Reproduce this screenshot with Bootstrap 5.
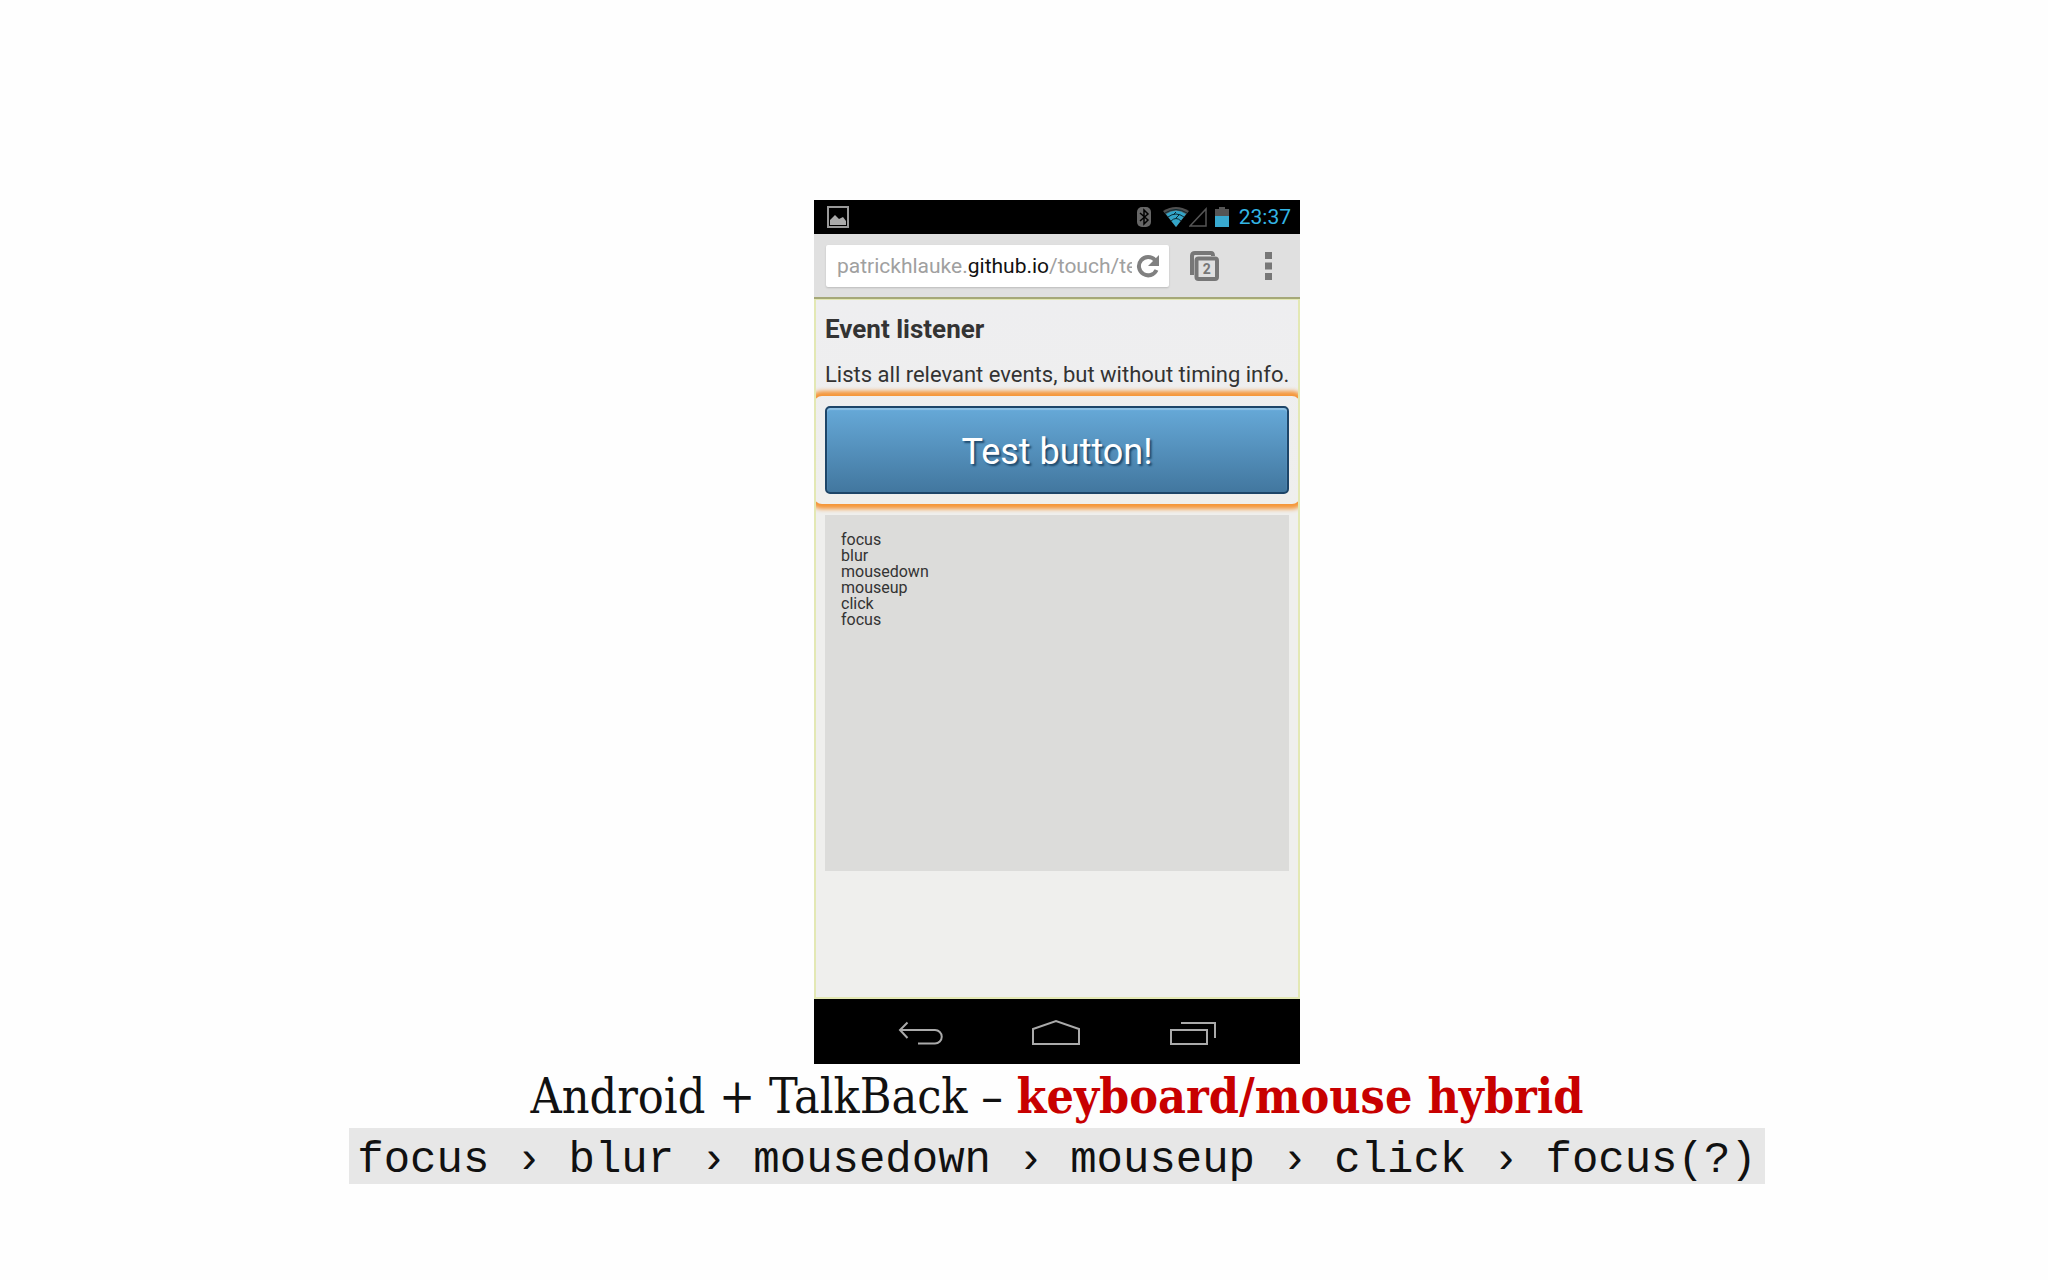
<!DOCTYPE html>
<html lang="en">
<head>
<meta charset="utf-8">
<meta name="viewport" content="width=device-width, initial-scale=1">
<title>Android + TalkBack</title>
<link href="https://cdn.jsdelivr.net/npm/bootstrap@5.3.0/dist/css/bootstrap.min.css" rel="stylesheet">
<style>
body { background: #fefefe; color: #111; font-family: Roboto, "Liberation Sans", sans-serif; }
svg { display: block; flex: none; }
.slide { padding: 200px 0 64px 66px; }
.phone { width: 100%; max-width: 486px; background: #000; }
.statusbar { height: 34px; padding: 0 9px 0 12px; }
.clock { color: #33b5e5; font-size: 21px; line-height: 34px; margin-left: 10px; }
.toolbar { height: 65px; padding: 11px 28px 10px 12px; background: #e0e0e0; border-bottom: 2px solid #a5a878; }
.omnibox { height: 42px; padding: 0 9px 0 11px; background: #fff; border-radius: 2px; box-shadow: 0 1px 2px #bbb; }
.address { color: #a0a0a0; font-size: 21px; line-height: 42px; white-space: nowrap; overflow: hidden; outline: 0; }
.address b { color: #111; font-weight: 400; }
.tool { border: 0; padding: 0; background: none; }
.tool-menu { margin-left: 46px; }
.webpage { height: 700px; border: 2px solid #e3e8b4; border-top-width: 1px; padding: 0 9px; background: linear-gradient(#eeeef0, #efefed 30%); color: #333; overflow: hidden; }
.webpage h1 { font-size: 26px; line-height: 30px; font-weight: 700; margin: 14px 0 16px; }
.webpage p { font-size: 22px; line-height: 30px; margin: 0 -9px 6px 0; white-space: nowrap; }
.focusring { margin: 0 -11px; padding: 10px 11px; border-radius: 8px; box-shadow: 0 0 4px 5px #f59638; }
.testbtn { height: 88px; border: 2px solid #1d4568; border-radius: 5px; color: #fff; font-size: 36px; background: linear-gradient(#66a9d8, #42779f); box-shadow: inset 0 2px 1px #8fc1e4; text-shadow: 2px 2px 2px #1f4a6d; }
.eventlog { height: 356px; margin-top: 11px; padding: 17px 16px; background: #dcdcda; font-size: 16px; line-height: 16px; }
.navkeys { height: 65px; padding: 2px 39px 0; }
.caption-line { font-family: "Roboto Slab", "DejaVu Serif Condensed", "DejaVu Serif", serif; font-size: 48px; line-height: 64px; margin: 0; font-weight: 400; }
.caption-line strong { color: #c80000; }
.sequence { font-family: "Liberation Mono", monospace; font-size: 44px; line-height: 48px; color: #111; background: #e7e7e7; padding: 8px 8px 0; white-space: pre; }
</style>
<script src="https://cdn.jsdelivr.net/npm/bootstrap@5.3.0/dist/js/bootstrap.bundle.min.js"></script>
</head>
<body>
<main class="slide d-flex flex-column align-items-center">
  <section class="phone" aria-label="Android phone">
    <div class="statusbar d-flex align-items-center">
      <svg width="24" height="24" viewBox="0 0 24 24"><path d="M2 2h20v20H2z" fill="none" stroke="#999" stroke-width="2"/><path d="M4 20v-5l5-5 4 4 4-2 3 4v4z" fill="#aaa"/></svg>
      <div class="d-flex align-items-center ms-auto">
        <svg class="me-2" width="14" height="20" viewBox="0 0 14 20"><rect width="14" height="20" rx="5" fill="#666"/><path d="M3 6l8 7-4 4V3l4 4-8 7" fill="none" stroke="#000" stroke-width="1.5"/></svg>
        <svg class="ms-1" width="26" height="20" viewBox="0 0 26 20"><path d="M0 4Q13-4 26 4L13 20z" fill="#505050"/><path d="M3 7Q13 0 23 7L13 20z" fill="#33a5c8"/><g fill="none" stroke="#0a2831" stroke-width="1"><path d="M2 6Q13-1 24 6M5 10Q13 4 21 10M8 14Q13 9 18 14"/><path d="M13 5l-3 3M13 11l3-3"/></g></svg>
        <svg width="18" height="20" viewBox="0 0 18 20"><path d="M1 19L17 2v17z" fill="none" stroke="#555" stroke-width="1.5"/></svg>
        <svg class="ms-2" width="14" height="20" viewBox="0 0 14 20"><path d="M0 2h4V0h6v2h4v8H0z" fill="#555"/><path d="M0 9h14v11H0z" fill="#38a9d0"/></svg>
        <span class="clock">23:37</span>
      </div>
    </div>
    <div class="toolbar d-flex align-items-center">
      <div class="omnibox d-flex align-items-center flex-grow-1 overflow-hidden">
        <div class="address flex-grow-1" role="textbox" aria-label="Address" contenteditable="true" spellcheck="false">patrickhlauke.<b>github.io</b>/touch/te</div>
        <button class="tool ms-1" aria-label="Reload"><svg width="24" height="24" viewBox="0 0 24 24"><path d="M19 6A9.200 9.200 0 1 0 20.500 16" fill="none" stroke="#808080" stroke-width="4"/><path d="M23 1v11H12z" fill="#808080"/></svg></button>
      </div>
      <button class="tool ms-3" aria-label="Tabs"><svg class="ms-1" width="30" height="30" viewBox="0 0 30 30"><path d="M3 24V5Q3 2 6 2h16Q24 2 24 5" fill="none" stroke="#777" stroke-width="4"/><rect x="7.500" y="7.500" width="20.500" height="20.500" rx="2" fill="#e0e0e0" stroke="#777" stroke-width="4"/><text x="17.700" y="23" text-anchor="middle" font-size="14" font-weight="700" fill="#777">2</text></svg></button>
      <button class="tool tool-menu" aria-label="Menu"><svg width="7" height="28" viewBox="0 0 7 28"><path d="M0 0h7v7H0zM0 10.500h7v7H0zM0 21h7v7H0z" fill="#777"/></svg></button>
    </div>
    <div class="webpage">
      <h1>Event listener</h1>
      <p>Lists all relevant events, but without timing info.</p>
      <div class="focusring"><button class="testbtn d-block w-100 px-0 pt-1 pb-0">Test button!</button></div>
      <div class="eventlog">focus<br>blur<br>mousedown<br>mouseup<br>click<br>focus</div>
    </div>
    <div class="navkeys d-flex align-items-center justify-content-around">
      <button class="tool" aria-label="Back"><svg width="46" height="28" viewBox="0 0 46 28"><path d="M10.500 3.500L3 11l7.500 8M3 11h35a6.500 6.500 0 0 1 0 13.500H21" fill="none" stroke="#aaa" stroke-width="2"/></svg></button>
      <button class="tool" aria-label="Home"><svg width="50" height="28" viewBox="0 0 50 28"><path d="M2 25V10L25 2l23 8v15z" fill="none" stroke="#aaa" stroke-width="2"/></svg></button>
      <button class="tool" aria-label="Recent apps"><svg width="48" height="28" viewBox="0 0 48 28"><path d="M2 11h36v14H2zM12 4h34v15" fill="none" stroke="#aaa" stroke-width="2"/></svg></button>
    </div>
  </section>
  <h2 class="caption-line text-nowrap">Android + TalkBack – <strong>keyboard/mouse hybrid</strong></h2>
  <code class="sequence">focus › blur › mousedown › mouseup › click › focus(?)</code>
</main>
</body>
</html>
